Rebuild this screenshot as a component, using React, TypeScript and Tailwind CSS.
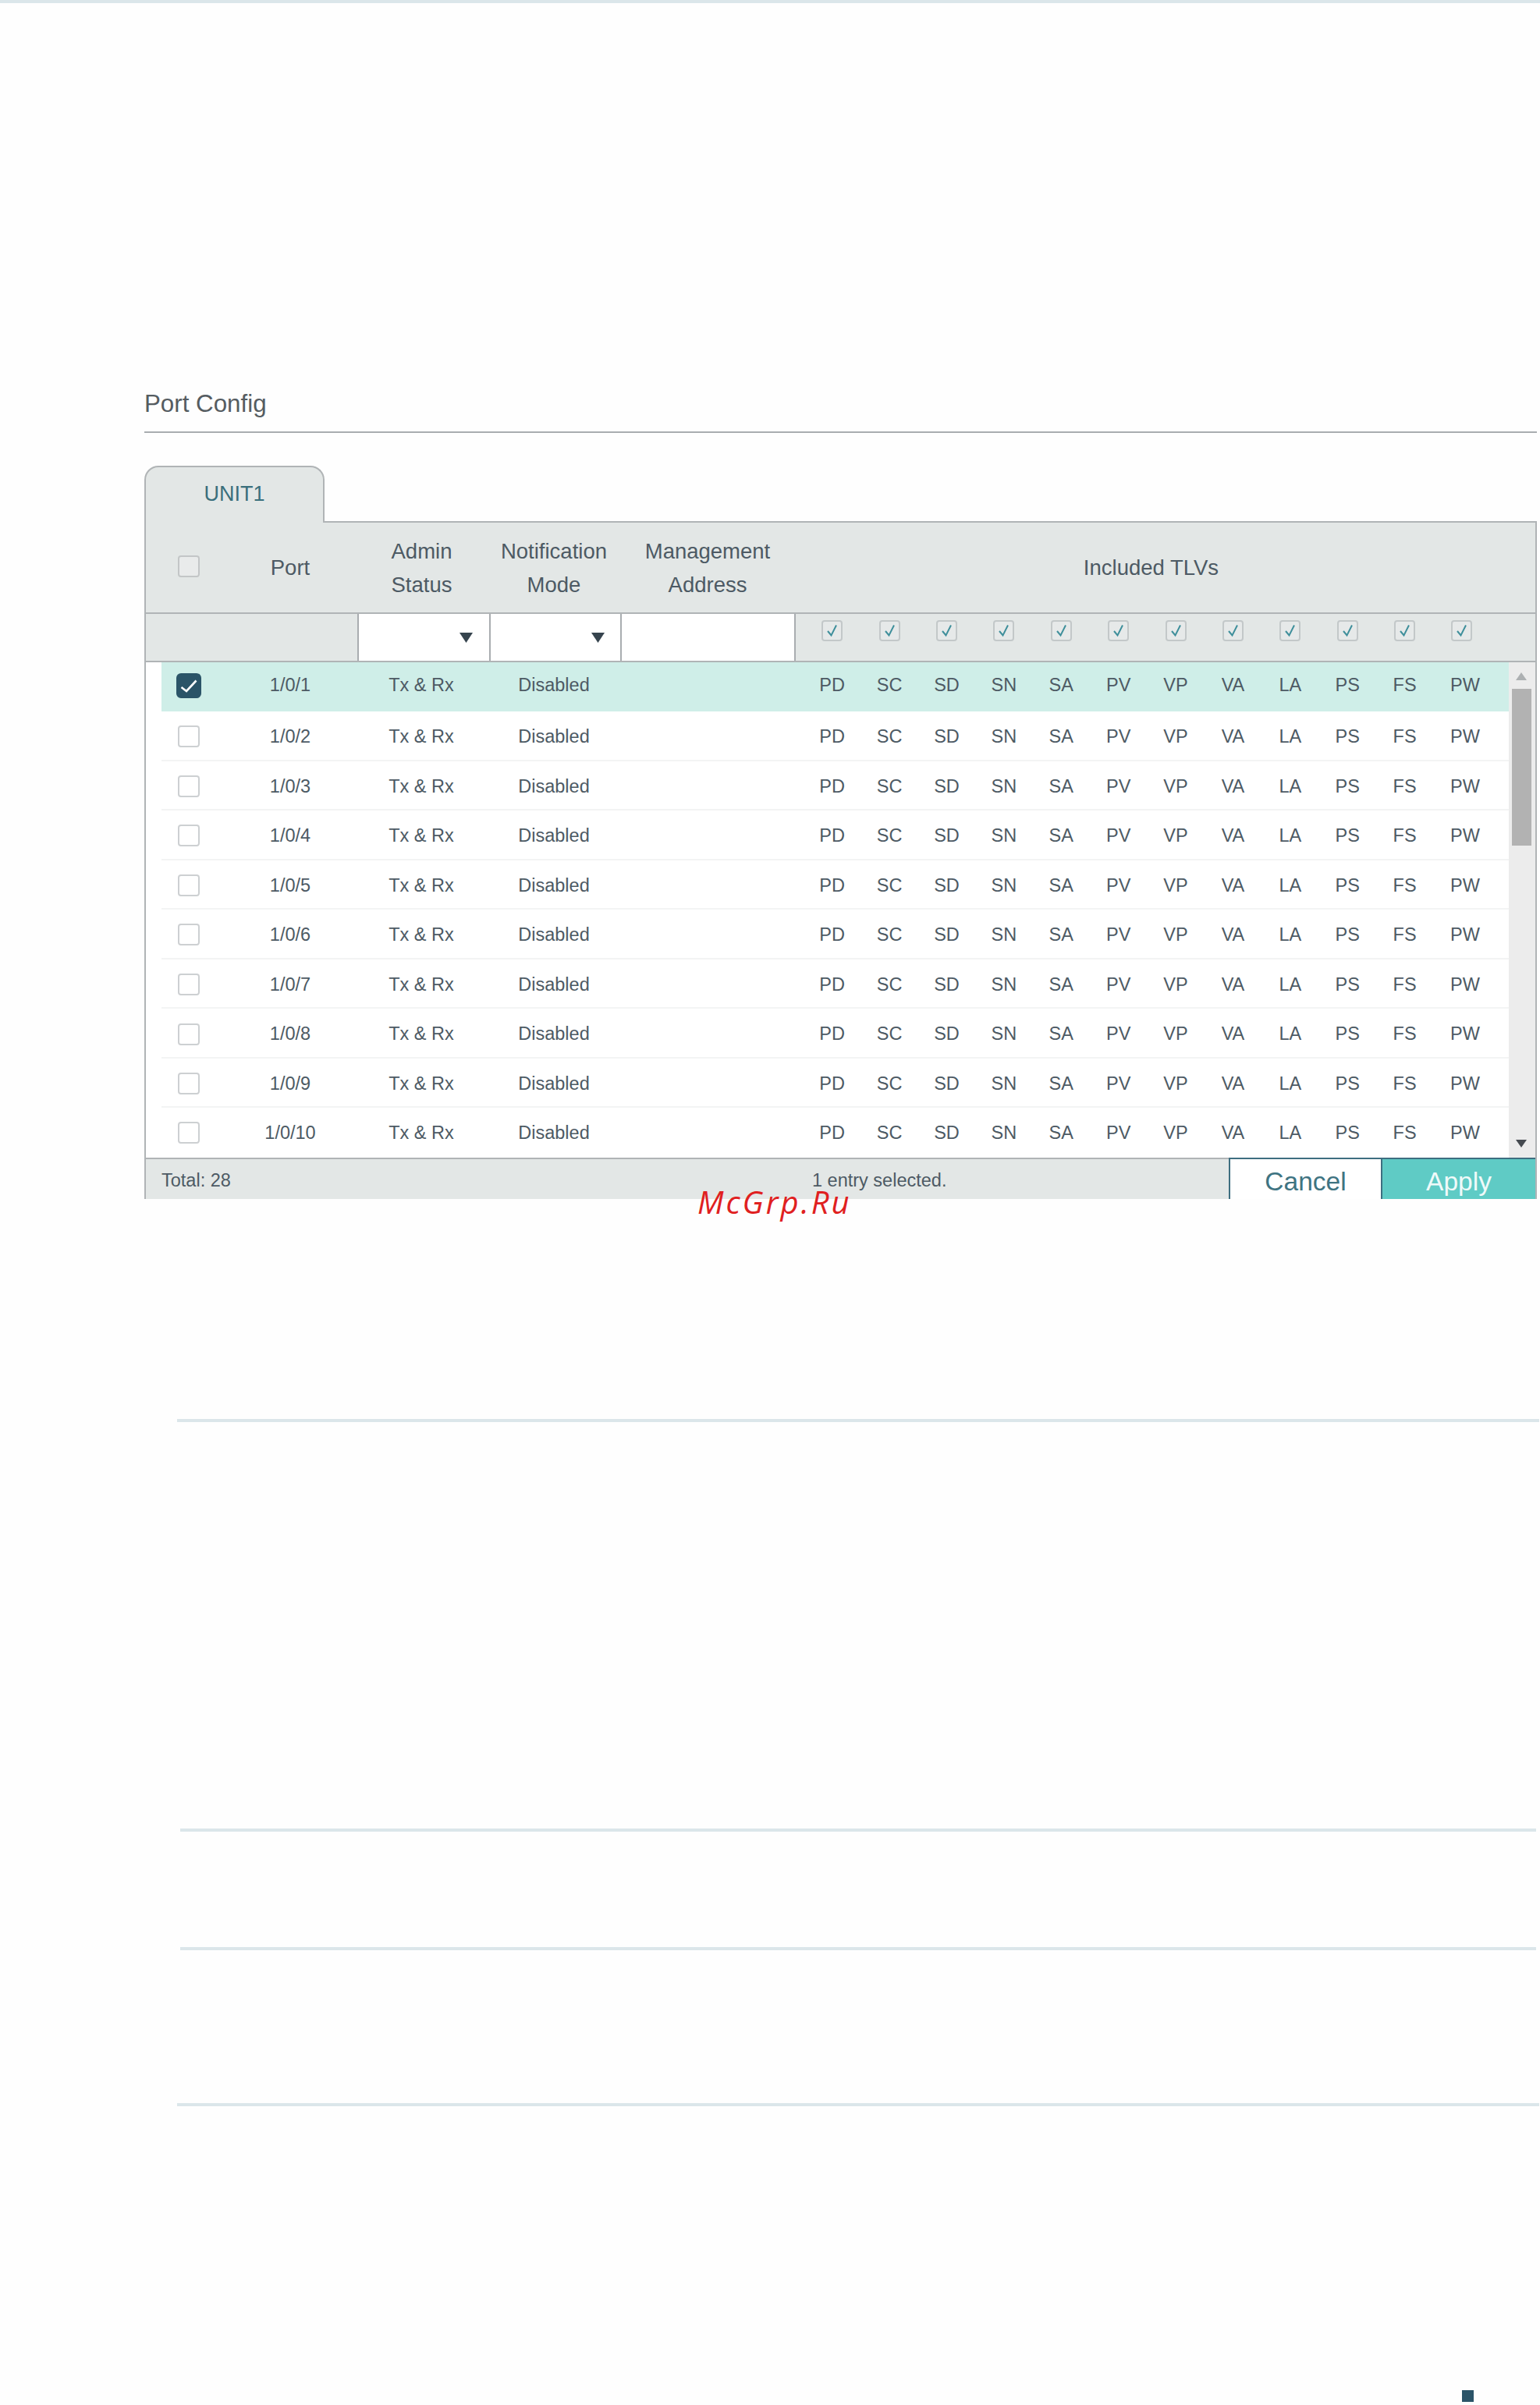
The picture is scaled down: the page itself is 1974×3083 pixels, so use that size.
const tlvs = ["PD", "SC", "SD", "SN", "SA", "PV", "VP", "VA", "LA", "PS", "FS", "PW"];
const ports = ["1/0/1", "1/0/2", "1/0/3", "1/0/4", "1/0/5", "1/0/6", "1/0/7", "1/0/8", "1/0/9", "1/0/10"];

function Arrow({ className }: { className: string }) {
  return (
    <svg width="17" height="13" viewBox="0 0 17 13" className={className}>
      <polygon points="0,0 17,0 8.5,13" fill="#36444e" />
    </svg>
  );
}

function TlvBox() {
  return (
    <div className="flex h-[27px] w-[27px] items-center justify-center rounded-[4px] border-2 border-[#c3c8c9] bg-[#e6e9e9]">
      <svg width="19" height="19" viewBox="0 0 19 19" fill="none">
        <path d="M4 10 L8.5 15.5 L15 2.5" stroke="#3f8f9b" strokeWidth="2" />
      </svg>
    </div>
  );
}

function PortRow({ port, selected }: { port: string; selected: boolean }) {
  return (
    <div
      className={
        selected
          ? "flex h-[63px] items-center bg-[#cfeee8] pb-[4px]"
          : "flex h-[63.55px] items-center border-b-2 border-[#f3f4f4] pt-[4px] last:border-b-0 last:pt-0"
      }
    >
      <div className={selected ? "flex w-[70px] justify-center" : "flex w-[70px] justify-center pb-[1px]"}>
        {selected ? (
          <div className="flex h-[32px] w-[32px] items-center justify-center rounded-[6px] bg-[#2b5468]">
            <svg width="32" height="32" viewBox="0 0 32 32" fill="none">
              <path d="M6.5 18 L13 23 L25.5 9.5" stroke="#ffffff" strokeWidth="2.6" />
            </svg>
          </div>
        ) : (
          <div className="h-[28px] w-[28px] rounded-[4px] border-2 border-[#cdd0d2] bg-white" />
        )}
      </div>
      <div className="w-[190px] text-center">{port}</div>
      <div className="w-[146px] text-center">Tx &amp; Rx</div>
      <div className="w-[194px] text-center">Disabled</div>
      <div className="w-[223px]" />
      <div className="flex">
        {tlvs.map((t) => (
          <div key={t} className={t === "PW" ? "w-[73.4px] pl-[8px] text-center" : "w-[73.4px] text-center"}>
            {t}
          </div>
        ))}
      </div>
    </div>
  );
}

export default function App() {
  return (
    <div className="relative h-[3083px] w-[1974px] overflow-hidden bg-[#fefefe] font-['Liberation_Sans',Arial,sans-serif] text-[#4d5a64]">
      <div className="h-[4px] bg-[#dbe6ea]" />

      <section className="pl-[185px] pr-[4px]">
        {/* Title */}
        <div className="border-b-2 border-[#a9adb0] pb-[17px] pt-[496px]">
          <h2 className="text-[31.3px] leading-[36px] text-[#555c61]">Port Config</h2>
        </div>

        {/* Tab */}
        <div className="relative z-10 -mb-[2px] mt-[42px] flex h-[73px] w-[231px] items-center justify-center rounded-t-[18px] border-2 border-b-0 border-[#b0b4b6] bg-[#e3e7e6] pb-[2px] text-[27px] text-[#3a6f7c]">
          UNIT1
        </div>

        {/* Table */}
        <div className="h-[869px] overflow-hidden border-x-2 border-t-2 border-[#b0b4b6]">
          <div className="grid h-[117px] grid-cols-[110px_150px_187px_152px_242px_897px] items-center border-b-2 border-[#b0b4b6] bg-[#e3e7e6] text-center text-[27.5px] leading-[43px]">
            <div className="flex justify-center pb-[3px]">
              <div className="h-[28px] w-[28px] rounded-[4px] border-2 border-[#c3c6c7] bg-[#e9ebeb]" />
            </div>
            <div>Port</div>
            <div>
              Admin
              <br />
              Status
            </div>
            <div>
              Notification
              <br />
              Mode
            </div>
            <div>
              Management
              <br />
              Address
            </div>
            <div className="pr-[2px]">Included TLVs</div>
          </div>

          <div className="flex h-[62px] border-b-2 border-[#b0b4b6] bg-[#e3e7e6]">
            <div className="w-[271px]" />
            <div className="flex w-[169px] items-center justify-end border-l-2 border-[#a9adb0] bg-white pr-[21px]">
              <Arrow className="block" />
            </div>
            <div className="flex w-[168px] items-center justify-end border-l-2 border-[#a9adb0] bg-white pr-[20px]">
              <Arrow className="block" />
            </div>
            <div className="w-[223px] border-l-2 border-[#a9adb0] bg-white" />
            <div className="flex border-l-2 border-[#a9adb0] pl-[10px] pt-[8px]">
              {tlvs.map((t) => (
                <div key={t} className="flex w-[73.4px] justify-center">
                  <TlvBox />
                </div>
              ))}
            </div>
          </div>

          <div className="flex h-[635px] bg-white pl-[20px] text-[23.5px]">
            <div className="w-[1727px]">
              {ports.map((p, i) => (
                <PortRow key={p} port={p} selected={i === 0} />
              ))}
            </div>
            <div className="flex w-[34px] flex-col items-center bg-[#ececec] pr-[2px]">
              <svg width="14" height="10" viewBox="0 0 14 10" className="mt-[13px]">
                <polygon points="7,0 14,10 0,10" fill="#adb0b2" />
              </svg>
              <div className="mt-[11px] h-[201px] w-[25px] bg-[#b2b2b2]" />
              <svg width="14" height="10" viewBox="0 0 14 10" className="mt-[377px]">
                <polygon points="0,0 14,0 7,10" fill="#454a50" />
              </svg>
            </div>
          </div>

          <div className="flex h-[53px] items-center border-t-2 border-[#b0b4b6] bg-[#e3e7e6] pl-[20px] text-[23.5px]">
            <span className="w-[834px] pt-[4px]">Total: 28</span>
            <span className="flex-1 pt-[4px]">1 entry selected.</span>
            <div className="-mr-[2px] -mt-[2px] flex h-[53px] text-[33.5px]">
              <div className="flex w-[197px] items-center justify-center border-2 border-b-0 border-[#3e6e80] bg-white pt-[7px] text-[#3f7482]">
                Cancel
              </div>
              <div className="-ml-[2px] flex w-[200px] items-center justify-center border-2 border-b-0 border-[#3e6e80] bg-[#5fcbc5] pt-[7px] text-[#effaf9]">
                Apply
              </div>
            </div>
          </div>
        </div>
      </section>

      {/* Rules left over from the page body */}
      <div className="ml-[227px] mt-[282px] h-[4px] w-[1746px] bg-[#dbe6ea]" />
      <div className="ml-[231px] mt-[521px] h-[4px] w-[1738px] bg-[#dbe6ea]" />
      <div className="ml-[231px] mt-[148px] h-[4px] w-[1738px] bg-[#dbe6ea]" />
      <div className="ml-[227px] mt-[196px] h-[4px] w-[1746px] bg-[#dbe6ea]" />
      <div className="ml-[1874px] mt-[364px] h-[15px] w-[15px] bg-[#2b5468]" />

      {/* Watermark */}
      <div className="absolute left-[894px] top-[1518px] font-['Open_Sans',sans-serif] text-[40px] italic leading-[46px] tracking-[3px] text-[#e02020]">
        McGrp.Ru
      </div>
    </div>
  );
}
